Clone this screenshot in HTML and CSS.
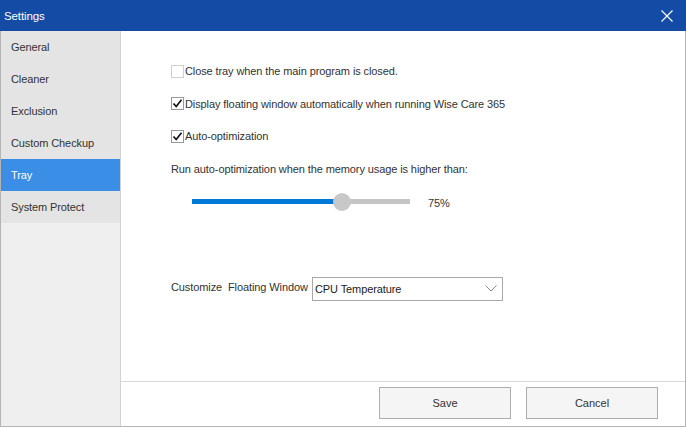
FILE: index.html
```html
<!DOCTYPE html>
<html>
<head>
    <title>Settings</title>
    <link rel="stylesheet" href="styles.css">
</head>
<body>
    <div class="window">
        <div class="titlebar">
            <span class="title">Settings</span>
            <svg class="close" width="12" height="12" viewBox="0 0 12 12">
                <path d="M0.5 0.5 L11.5 11.5 M11.5 0.5 L0.5 11.5" stroke="#fff" stroke-width="1.2" fill="none"/>
            </svg>
        </div>
        <div class="body">
            <ul class="sidebar">
                <li>General</li>
                <li>Cleaner</li>
                <li>Exclusion</li>
                <li>Custom Checkup</li>
                <li class="active">Tray</li>
                <li>System Protect</li>
            </ul>
            <div class="main">
                <div class="content">
                    <label class="check-row">
                        <span class="box"></span> Close tray when the main program is closed.
                    </label>
                    <label class="check-row">
                        <span class="box checked">
                            <svg width="11" height="11" viewBox="0 0 11 11"><path d="M1.5 5.5 L4.2 8.5 L9.5 1.8" stroke="#111" stroke-width="1.7" fill="none"/></svg>
                        </span> Display floating window automatically when running Wise Care 365
                    </label>
                    <label class="check-row">
                        <span class="box checked">
                            <svg width="11" height="11" viewBox="0 0 11 11"><path d="M1.5 5.5 L4.2 8.5 L9.5 1.8" stroke="#111" stroke-width="1.7" fill="none"/></svg>
                        </span> Auto-optimization
                    </label>
                    <div class="text-row">Run auto-optimization when the memory usage is higher than:</div>
                    <div class="slider-row">
                        <div class="slider">
                            <div class="slider-fill" style="width: 150px;"></div>
                            <div class="slider-thumb" style="left: 141px;"></div>
                        </div>
                        <span class="percent">75%</span>
                    </div>
                    <div class="select-row">
                        <span class="select-label">Customize&nbsp; Floating Window</span>
                        <div class="select">
                            <span>CPU Temperature</span>
                            <svg width="12" height="7" viewBox="0 0 12 7"><path d="M0.5 0.5 L6 6 L11.5 0.5" stroke="#888" stroke-width="1" fill="none"/></svg>
                        </div>
                    </div>
                </div>
                <div class="footer">
                    <button class="button">Save</button>
                    <button class="button">Cancel</button>
                </div>
            </div>
        </div>
    </div>
</body>
</html>
```

FILE: styles.css
```css
* { box-sizing: border-box; }
body { margin: 0; font-family: "Liberation Sans", Arial, sans-serif; font-size: 11px; letter-spacing: -0.1px; color: #333; background: #fff; }
.window {
    width: 686px;
    height: 427px;
    border: 1px solid #b4b4b4;
    border-top: none;
    display: flex;
    flex-direction: column;
}
.titlebar {
    height: 31px;
    margin: 0 -1px;
    background: #144ba5;
    color: #fff;
    display: flex;
    align-items: center;
    justify-content: space-between;
    padding: 0 13px 0 4px;
}
.title { font-size: 11.5px; }
.body { flex: 1; display: flex; min-height: 0; }
.sidebar {
    width: 120px;
    margin: 0;
    padding: 0;
    list-style: none;
    background: #efefef;
    border-right: 1px solid #d4d4d4;
}
.sidebar li {
    height: 32px;
    line-height: 33px;
    padding-left: 10px;
    background: #e4e4e4;
    color: #333;
}
.sidebar li.active { background: #3a8ee6; color: #fff; }
.main { flex: 1; display: flex; flex-direction: column; }
.content { flex: 1; padding: 30px 0 0 50px; }
.check-row {
    display: flex;
    align-items: center;
    height: 20px;
    margin-bottom: 12.5px;
}
.box {
    width: 13px;
    height: 13px;
    border: 1px solid #cfcfcf;
    margin-right: 1px;
    display: flex;
    align-items: center;
    justify-content: center;
    background: #fff;
}
.box.checked { border-color: #999; }
.text-row { height: 20px; line-height: 20px; }
.slider-row {
    display: flex;
    align-items: center;
    height: 26px;
    margin-top: 10px;
    padding-left: 21px;
}
.slider {
    position: relative;
    width: 218px;
    height: 5px;
    background: #c4c4c4;
}
.slider-fill { height: 5px; background: #0078d7; }
.slider-thumb {
    position: absolute;
    top: -6.5px;
    width: 18px;
    height: 18px;
    border-radius: 50%;
    background: #c8c8c8;
}
.percent { margin-left: 18px; margin-top: 2px; }
.select-row {
    display: flex;
    align-items: center;
    margin-top: 62px;
}
.select-label { width: 141px; white-space: nowrap; margin-top: -3px; }
.select {
    width: 191px;
    height: 24px;
    border: 1px solid #a8a8a8;
    display: flex;
    align-items: center;
    justify-content: space-between;
    padding: 0 5px 0 2px;
    color: #222;
}
.footer {
    height: 45px;
    border-top: 1px solid #d9d9d9;
    display: flex;
    justify-content: flex-end;
    gap: 15px;
    padding: 5px 27px 0 0;
}
.button {
    width: 132px;
    height: 32px;
    background: #f5f5f5;
    border: 1px solid #adadad;
    font-family: inherit;
    font-size: 11px;
    color: #333;
}
```
